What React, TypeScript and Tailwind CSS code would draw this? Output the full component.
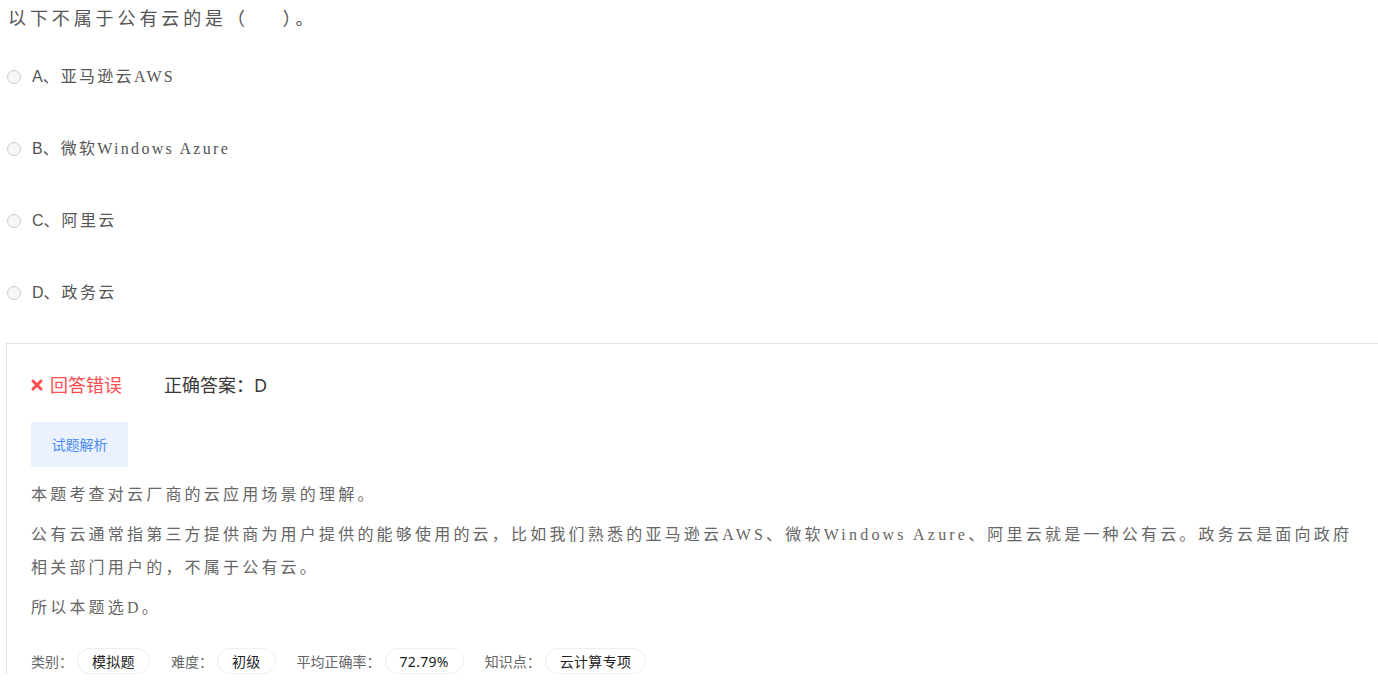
const SERIF = "font-['Liberation_Serif','Noto_Sans_CJK_SC',serif]"
const SANS = "font-['Liberation_Sans','Noto_Sans_CJK_SC',sans-serif]"
const UI = "font-['Noto_Sans','Noto_Sans_CJK_SC',sans-serif]"

const OPTIONS = [
  { key: 'A', text: '亚马逊云AWS' },
  { key: 'B', text: '微软Windows Azure' },
  { key: 'C', text: '阿里云' },
  { key: 'D', text: '政务云' },
]

const META = [
  { label: '类别：', value: '模拟题' },
  { label: '难度：', value: '初级' },
  { label: '平均正确率：', value: '72.79%' },
  { label: '知识点：', value: '云计算专项' },
]

function CrossIcon() {
  return (
    <svg width="12" height="12" viewBox="0 0 12 12" className="shrink-0">
      <path d="M2 2 L10 10 M10 2 L2 10" stroke="#ff4d4f" strokeWidth="3" strokeLinecap="round" />
    </svg>
  )
}

export default function App() {
  return (
    <div className="w-[1378px] h-[695px] overflow-hidden bg-white pt-px">
      <div className={`h-9 pl-2 text-[18px] leading-[36px] tracking-[3.9px] text-[#555] ${SERIF}`}>
        以下不属于公有云的是（{'\u00a0\u00a0\u00a0\u00a0'}）。
      </div>

      <div className="mt-1 flex flex-col">
        {OPTIONS.map((o) => (
          <label key={o.key} className="h-[72px] flex items-center pl-[7px]">
            <span className="w-[14px] h-[14px] rounded-full border border-[#cfcfcf] bg-[#f7f7f7] shrink-0" />
            <span className={`ml-[11px] text-[16px] text-[#555] ${SANS}`}>{o.key}、</span>
            <span className={`ml-[2px] text-[16px] tracking-[2.3px] text-[#555] ${SERIF}`}>{o.text}</span>
          </label>
        ))}
      </div>

      <div className="ml-[6px] mt-[14px] w-[1420px] border-t border-l border-[#e3e3e3] pl-6 pt-[29px]">
        <div className={`flex items-center h-6 text-[18px] leading-6 ${UI}`}>
          <div className="flex items-center gap-[7px] text-[#ff4d4f]">
            <CrossIcon />
            <span>回答错误</span>
          </div>
          <span className="ml-[42px] text-[#3a3a3a]">正确答案：D</span>
        </div>

        <div className={`mt-[25px] w-[97px] h-[45px] flex items-center justify-center bg-[#ebf1fe] text-[14px] text-[#4b8cf5] ${UI}`}>
          试题解析
        </div>

        <div className={`mt-[11px] w-[1328px] text-[16px] leading-[33px] tracking-[3.2px] text-[#666] ${SERIF}`}>
          <p>本题考查对云厂商的云应用场景的理解。</p>
          <p className="mt-[7px]">
            公有云通常指第三方提供商为用户提供的能够使用的云，比如我们熟悉的亚马逊云AWS、微软Windows Azure、阿里云就是一种公有云。政务云是面向政府相关部门用户的，不属于公有云。
          </p>
          <p className="mt-[7px]">所以本题选D。</p>
        </div>

        <div className={`mt-[24px] flex items-center text-[14px] ${UI}`}>
          {META.map((m, i) => (
            <div key={m.label} className={`flex items-center ${i > 0 ? 'ml-[21px]' : ''}`}>
              <span className="text-[#666]">{m.label}</span>
              <span className="ml-[4px] h-[26px] px-[14px] flex items-center rounded-full border border-[#eeeeee] text-[#222] tracking-[0.3px]">
                {m.value}
              </span>
            </div>
          ))}
        </div>
      </div>
    </div>
  )
}
